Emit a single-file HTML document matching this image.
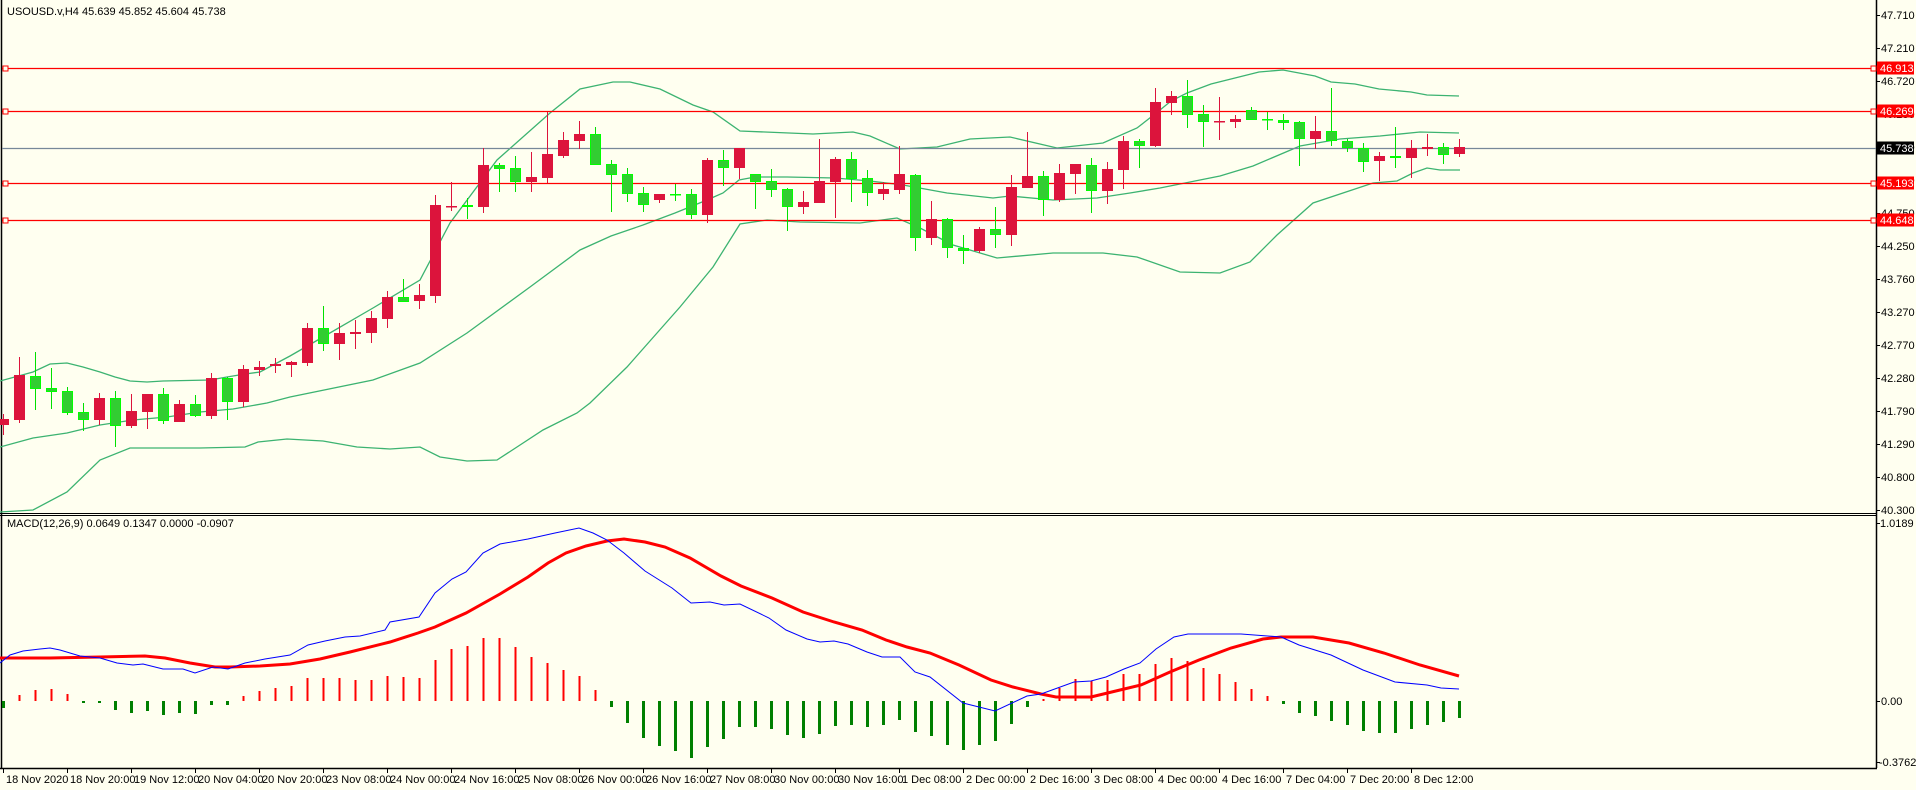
<!DOCTYPE html>
<html><head><meta charset="utf-8"><style>
html,body{margin:0;padding:0;background:#FFFFF0;}
svg{display:block;}
text{font-family:"Liberation Sans",sans-serif;font-size:11px;}
</style></head><body>
<svg id="s" width="1916" height="790" viewBox="0 0 1916 790" xmlns="http://www.w3.org/2000/svg">
<rect x="0" y="0" width="1916" height="790" fill="#FFFFF0"/>
<g id="g"></g>
<text x="7" y="15" fill="#000">USOUSD.v,H4  45.639 45.852 45.604 45.738</text>
<text x="7" y="527" fill="#000">MACD(12,26,9) 0.0649 0.1347 0.0000 -0.0907</text>
</svg>
<script>
var g=document.getElementById('g'),h='';
function L(x1,y1,x2,y2,c,w){h+='<line x1="'+x1+'" y1="'+y1+'" x2="'+x2+'" y2="'+y2+'" stroke="'+c+'" stroke-width="'+w+'"/>';}
function R(x,y,w,hh,f,s){h+='<rect x="'+x+'" y="'+y+'" width="'+w+'" height="'+hh+'" fill="'+f+'"'+(s?' stroke="'+s+'" stroke-width="1"':'')+'/>';}
function P(pts,c,w){h+='<polyline fill="none" stroke="'+c+'" stroke-width="'+w+'" points="'+pts.map(function(p){return p[0]+','+p[1]}).join(' ')+'"/>';}
function T(x,y,t,c,a){h+='<text x="'+x+'" y="'+y+'" fill="'+c+'"'+(a?' text-anchor="'+a+'"':'')+'>'+t+'</text>';}
L(1.5,0,1.5,768,'#000',1.5);L(1876.5,0,1876.5,768,'#000',1.5);
L(0,513.5,1877,513.5,'#000',1);L(0,515.5,1877,515.5,'#000',1);L(0,768.5,1877,768.5,'#000',1.5);
var up=[[0,381],[33,372],[50,364],[67,363],[83,367],[100,372],[115,377],[130,381],[147,382],[163,381],[210,380],[227,377],[245,374],[260,372],[290,356],[323,337],[373,308],[420,280],[450,223],[497,160],[550,113],[580,89],[613,82],[630,82],[660,89],[693,105],[713,112],[740,131],[813,134],[853,132],[870,136],[900,149],[937,147],[970,139],[1010,137],[1057,148],[1103,143],[1137,128],[1160,110],[1171,101],[1187,93],[1211,84],[1235,78],[1259,72],[1283,70],[1299,73],[1315,76],[1331,82],[1355,84],[1379,89],[1411,92],[1427,95],[1459,96]];
var mid=[[0,447],[33,438],[67,433],[100,425],[133,420],[167,417],[200,412],[233,409],[267,403],[290,397],[373,380],[420,363],[467,333],[530,287],[580,250],[611,236],[643,225],[675,213],[707,200],[723,193],[739,180],[755,177],[787,177],[835,178],[870,181],[903,185],[947,193],[993,198],[1010,196],[1053,200],[1097,198],[1130,193],[1160,188],[1220,176],[1253,166],[1300,146],[1340,139],[1380,136],[1420,132],[1459,133]];
var lo=[[0,512],[33,510],[67,492],[100,460],[130,448],[200,448],[245,447],[258,442],[287,439],[323,441],[357,447],[390,449],[420,447],[440,457],[467,461],[497,460],[517,447],[543,430],[577,413],[590,403],[627,367],[680,307],[713,267],[740,224],[767,220],[800,222],[860,223],[897,218],[920,228],[953,245],[997,258],[1053,253],[1103,253],[1137,257],[1180,272],[1220,273],[1250,262],[1277,235],[1313,203],[1343,193],[1373,183],[1397,181],[1413,173],[1427,168],[1440,170],[1460,170]];
P(up,'#3CB371',1.3);P(mid,'#3CB371',1.3);P(lo,'#3CB371',1.3);
L(2,148.5,1876,148.5,'#778899',1.3);
[68,111,183,220].forEach(function(y){L(2,y+.5,1876,y+.5,'#FF0000',1.3);R(3,y-2,5,5,'#FFFFF0','#FF0000');R(1871,y-2,5,5,'#FFFFF0','#FF0000');});
var C=[['r',419,425,414,435],['r',375,420,357,423],['g',376,389,352,410],['g',388,392,368,409],['g',391,413,387,415],['g',412,420,403,431],['r',398,420,393,425],['g',398,426,391,447],['r',411,426,394,428],['r',394,412,394,429],['g',394,421,388,424],['r',404,422,400,422],['g',404,416,395,417],['r',378,416,373,419],['g',378,402,377,420],['r',369,402,365,407],['r',367,370,361,376],['r',364,366,358,373],['r',362,365,361,377],
['r',328,363,323,366],['g',328,344,306,351],['r',333,344,323,360],['r',332,334,320,349],['r',318,333,311,343],['r',297,319,291,328],['g',297,302,279,302],['r',295,301,284,309],['r',205,296,195,303],['r',206,207,182,211],['g',205,207,198,219],['r',165,207,148,213],['g',165,169,163,192],['g',168,182,156,192],['r',177,182,152,192],['r',154,178,112,183],['r',140,156,132,158],['r',134,141,121,149],
['g',134,165,127,165],['g',164,175,160,212],['g',174,194,168,202],['g',193,205,187,212],['r',194,200,194,203],['g',194,195,184,201],['g',194,215,189,219],['r',160,215,158,223],['g',160,168,150,186],['r',148,168,148,179],['g',174,182,174,209],['g',181,190,169,197],['g',189,207,188,231],['r',202,207,191,214],['r',181,203,139,203],['r',159,182,157,218],['g',159,179,152,202],['g',178,193,170,206],
['r',189,194,182,200],['r',174,190,146,194],['g',175,238,174,251],['r',219,238,201,245],['g',219,248,218,258],['g',248,251,235,264],['r',229,251,227,253],['g',229,235,207,248],['r',187,235,175,246],['r',176,188,132,188],['g',176,200,171,216],['r',173,200,164,202],['r',164,174,164,194],['g',165,191,158,213],['r',169,191,162,204],['r',141,170,136,189],['g',141,146,139,168],['r',102,146,88,147],
['r',96,103,91,115],['g',96,115,80,128],['g',114,122,105,147],['r',121,122,97,140],['r',119,122,115,128],['g',110,120,107,120],['g',119,120,112,130],['g',120,123,114,130],['g',122,139,121,166],['r',131,139,116,149],['g',131,141,88,146],['g',141,148,139,152],['g',148,162,143,172],['r',156,161,152,181],['g',156,158,127,168],['r',148,158,140,178],['r',147,149,134,156],['g',147,155,143,164],['r',147,154,139,157]];
C.forEach(function(c,i){var x=3+16*i,col=c[0]=='r'?'#DC143C':'#00E000';
L(x+.5,c[3],x+.5,c[4],col,1);
var hh=Math.max(1.5,c[2]-c[1]);
if(c[0]=='r')R(x-5,c[1],11,hh,'#DC143C');else R(x-4.5,c[1]+.5,10,hh-1,'#32CD32','#00FF00');});
var H=[708,695,690,689,694,702,702,710,713,711,715,713,714,705,705,696,691,688,686,678,678,678,680,680,676,677,678,660,649,646,638,638,647,657,663,670,676,690,707,723,738,746,751,758,747,739,727,727,729,735,738,734,726,725,727,725,720,732,736,745,750,745,741,724,707,699,688,679,681,680,674,674,664,658,661,668,674,682,689,696,704,713,716,721,725,731,733,733,729,725,722,718];
H.forEach(function(y,i){var x=3+16*i;if(y<701)L(x+.5,701,x+.5,y,'#FF0000',2);else L(x+.5,701,x+.5,Math.max(y,703),'#008000',3);});
var sig=[[0,658],[50,658],[100,657],[145,656],[165,658],[190,663],[215,667],[230,667],[260,666],[290,664],[320,659],[350,652],[390,642],[418,633],[435,627],[466,613],[500,594],[528,577],[548,563],[566,553],[586,546],[607,541],[624,539],[645,542],[665,547],[690,558],[721,576],[741,586],[772,598],[803,612],[834,622],[862,630],[886,640],[907,647],[930,653],[959,665],[991,680],[1013,687],[1041,694],[1056,697],[1091,697],[1120,690],[1141,685],[1170,672],[1199,660],[1231,648],[1263,639],[1281,637],[1313,637],[1349,643],[1384,653],[1420,665],[1459,676]];
var mac=[[0,663],[10,655],[23,651],[40,649],[50,648],[60,650],[80,656],[100,658],[117,663],[133,665],[143,664],[163,669],[183,669],[195,673],[213,667],[228,669],[245,663],[265,659],[290,655],[308,645],[325,641],[345,637],[360,636],[385,630],[390,622],[419,617],[435,593],[452,579],[466,572],[483,553],[500,544],[528,539],[555,533],[579,528],[593,533],[607,540],[624,553],[645,571],[672,588],[691,603],[710,602],[724,605],[740,604],[769,618],[786,630],[807,639],[820,642],[834,641],[848,644],[867,652],[882,657],[900,657],[915,672],[930,677],[963,703],[995,711],[1027,696],[1041,694],[1074,682],[1091,681],[1106,677],[1124,669],[1140,663],[1156,649],[1174,637],[1188,634],[1241,634],[1281,637],[1299,645],[1331,655],[1363,670],[1395,682],[1427,685],[1441,688],[1459,689]];
P(sig,'#FF0000',3);P(mac,'#0000FF',1);
var pv=['47.710','47.210','46.720','46.230','45.740','45.250','44.750','44.250','43.760','43.270','42.770','42.280','41.790','41.290','40.800','40.300'];
pv.forEach(function(v,i){var y=15+33*i;L(1877,y+.5,1880,y+.5,'#000',1);T(1881,y+4,v,'#000');});
[[68,'46.913','#FF0000'],[111,'46.269','#FF0000'],[148,'45.738','#000'],[183,'45.193','#FF0000'],[220,'44.648','#FF0000']].forEach(function(a){R(1877,a[0]-6.5,37,13,a[2]);T(1880,a[0]+4,a[1],'#FFF');});
L(1877,523.5,1880,523.5,'#000',1);T(1880,527,'1.0189','#000');
L(1877,701.5,1880,701.5,'#000',1);T(1881,705,'0.00','#000');
L(1877,762.5,1880,762.5,'#000',1);T(1879,766,'-0.3762','#000');
var D=['18 Nov 2020','18 Nov 20:00','19 Nov 12:00','20 Nov 04:00','20 Nov 20:00','23 Nov 08:00','24 Nov 00:00','24 Nov 16:00','25 Nov 08:00','26 Nov 00:00','26 Nov 16:00','27 Nov 08:00','30 Nov 00:00','30 Nov 16:00','1 Dec 08:00','2 Dec 00:00','2 Dec 16:00','3 Dec 08:00','4 Dec 00:00','4 Dec 16:00','7 Dec 04:00','7 Dec 20:00','8 Dec 12:00'];
D.forEach(function(t,i){var x=3+64*i;L(x+.5,769,x+.5,773,'#000',1);T(x+3,783,t,'#000');});
g.innerHTML=h;
</script>
</body></html>
